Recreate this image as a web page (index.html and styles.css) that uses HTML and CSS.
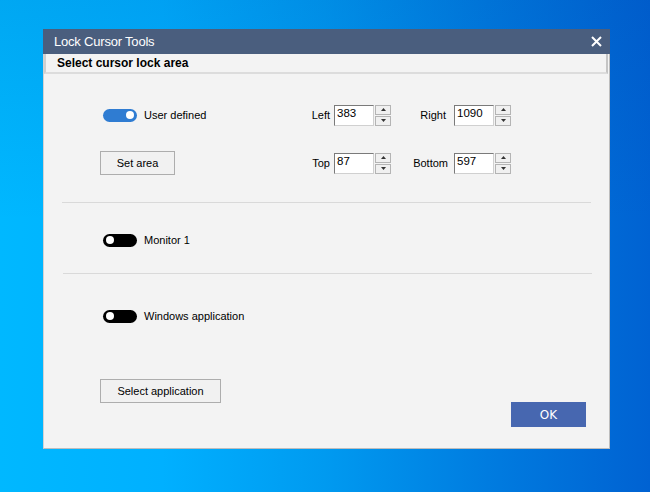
FILE: index.html
```html
<!DOCTYPE html>
<html>
<head>
<meta charset="utf-8">
<link rel="stylesheet" href="styles.css">
</head>
<body>
<div class="desktop">
  <div class="dialog">
    <div class="titlebar">
      <span class="title">Lock Cursor Tools</span>
      <svg class="close" width="11" height="11" viewBox="0 0 11 11"><path d="M1 1L10 10M10 1L1 10" stroke="#fff" stroke-width="2" fill="none"/></svg>
    </div>
    <div class="header">Select cursor lock area</div>

    <div class="section first">
      <div class="cell lead"><span class="toggle on"><i></i></span><span class="lbl">User defined</span></div>
      <div class="cell flabel l1">Left</div>
      <div class="cell"><div class="spin"><div class="box">383</div><div class="arrows"><div class="arrow"><svg width="5" height="3" viewBox="0 0 5 3"><path d="M0 3H5L2.5 0Z" fill="#333"/></svg></div><div class="arrow"><svg width="5" height="3" viewBox="0 0 5 3"><path d="M0 0H5L2.5 3Z" fill="#333"/></svg></div></div></div></div>
      <div class="cell flabel l2">Right</div>
      <div class="cell"><div class="spin"><div class="box">1090</div><div class="arrows"><div class="arrow"><svg width="5" height="3" viewBox="0 0 5 3"><path d="M0 3H5L2.5 0Z" fill="#333"/></svg></div><div class="arrow"><svg width="5" height="3" viewBox="0 0 5 3"><path d="M0 0H5L2.5 3Z" fill="#333"/></svg></div></div></div></div>

      <div class="cell"><button class="btn setarea">Set area</button></div>
      <div class="cell flabel l1">Top</div>
      <div class="cell"><div class="spin"><div class="box">87</div><div class="arrows"><div class="arrow"><svg width="5" height="3" viewBox="0 0 5 3"><path d="M0 3H5L2.5 0Z" fill="#333"/></svg></div><div class="arrow"><svg width="5" height="3" viewBox="0 0 5 3"><path d="M0 0H5L2.5 3Z" fill="#333"/></svg></div></div></div></div>
      <div class="cell flabel l2b">Bottom</div>
      <div class="cell"><div class="spin"><div class="box">597</div><div class="arrows"><div class="arrow"><svg width="5" height="3" viewBox="0 0 5 3"><path d="M0 3H5L2.5 0Z" fill="#333"/></svg></div><div class="arrow"><svg width="5" height="3" viewBox="0 0 5 3"><path d="M0 0H5L2.5 3Z" fill="#333"/></svg></div></div></div></div>
    </div>
    <div class="sep sep1"></div>

    <div class="section second">
      <div class="cell lead"><span class="toggle"><i></i></span><span class="lbl">Monitor 1</span></div>
    </div>
    <div class="sep sep2"></div>

    <div class="section third">
      <div class="cell lead"><span class="toggle"><i></i></span><span class="lbl">Windows application</span></div>
    </div>
    <div class="footer">
      <button class="btn selapp">Select application</button>
      <button class="ok">OK</button>
    </div>
  </div>
</div>
</body>
</html>
```
FILE: styles.css
```css
html, body {
  margin: 0;
  padding: 0;
}
body {
  font-family: "Liberation Sans", Arial, sans-serif;
  font-size: 11px;
  color: #000;
}
.desktop {
  width: 650px;
  height: 492px;
  box-sizing: border-box;
  padding: 29px 0 0 43px;
  background:
    linear-gradient(180deg, rgba(0, 50, 150, 0.12) 0%, rgba(0, 0, 0, 0) 45%),
    linear-gradient(90deg, #00b8ff 0%, #00b0ff 25%, #009af0 50%, #007ce0 75%, #0062d2 100%);
  overflow: hidden;
}
.dialog {
  width: 567px;
  height: 420px;
  box-sizing: border-box;
  background: #f3f3f3;
  border-left: 1px solid #d2d2d2;
  border-right: 1px solid #bdbdbd;
  border-bottom: 1px solid #bdbdbd;
  display: flex;
  flex-direction: column;
}
.titlebar {
  height: 25px;
  flex: none;
  background: #4a5e7e;
  color: #fff;
  display: flex;
  align-items: center;
  justify-content: space-between;
  padding: 0 8px 0 11px;
  margin: 0 -1px 0 -1px;
}
.title {
  font-size: 13px;
  letter-spacing: -0.2px;
}
.close {
  display: block;
}
.header {
  height: 18px;
  flex: none;
  box-sizing: content-box;
  border-left: 2px solid #cfcfcf;
  border-right: 2px solid #c4c4c4;
  border-bottom: 2px solid #dcdcdc;
  margin-right: 1px;
  padding-left: 11px;
  font-size: 12px;
  font-weight: bold;
  line-height: 18px;
}
.section {
  display: grid;
  grid-template-columns: 200px 34px 57px 63px 57px;
  padding-left: 56px;
}
.section.first {
  grid-template-rows: 24px 24px;
  row-gap: 24px;
  padding-top: 29px;
}
.section.second {
  padding-top: 25px;
  grid-template-rows: 24px;
}
.section.third {
  padding-top: 30px;
  grid-template-rows: 24px;
}
.cell {
  display: flex;
  align-items: center;
}
.lead {
  padding-left: 3px;
}
.flabel {
  justify-content: flex-end;
  padding-right: 4px;
}
.l2 {
  padding-right: 8px;
}
.l2b {
  padding-right: 6px;
}
.toggle {
  width: 34px;
  height: 13px;
  border-radius: 7px;
  background: #000;
  display: flex;
  align-items: center;
  padding: 0 3px;
  box-sizing: border-box;
  flex: none;
}
.toggle i {
  width: 8px;
  height: 8px;
  border-radius: 50%;
  background: #fff;
  display: block;
}
.toggle.on {
  background: #2f7cd2;
  justify-content: flex-end;
}
.lbl {
  margin-left: 7px;
}
.btn {
  font-family: "Liberation Sans", Arial, sans-serif;
  font-size: 11px;
  color: #000;
  background: #f1f1f1;
  border: 1px solid #adadad;
  height: 24px;
  padding: 0;
  margin: 0;
}
.setarea {
  width: 75px;
}
.spin {
  display: flex;
  height: 21px;
}
.box {
  width: 40px;
  box-sizing: border-box;
  background: #fff;
  border: 1px solid #7a7a7a;
  border-right-color: #d0d0d0;
  border-bottom-color: #d0d0d0;
  padding: 1px 0 0 2px;
  line-height: 13px;
  font-size: 11.5px;
}
.arrows {
  width: 16px;
  margin-left: 1px;
  display: flex;
  flex-direction: column;
  gap: 1px;
}
.arrow {
  flex: 1;
  box-sizing: border-box;
  background: #f0f0f0;
  border: 1px solid #b4b4b4;
  display: flex;
  align-items: center;
  justify-content: center;
}
.arrow svg {
  display: block;
}
.sep {
  height: 1px;
  background: #d9d9d9;
  flex: none;
}
.sep1 {
  margin: 27px 0 0 18px;
  width: 529px;
}
.sep2 {
  margin: 21px 0 0 19px;
  width: 529px;
}
.footer {
  display: flex;
  justify-content: space-between;
  height: 48px;
  margin-top: 51px;
  padding: 0 23px 0 56px;
}
.selapp {
  width: 121px;
  align-self: flex-start;
}
.ok {
  align-self: flex-end;
  width: 75px;
  height: 25px;
  background: #4767b0;
  color: #fff;
  border: none;
  font-family: "DejaVu Sans", sans-serif;
  font-size: 12px;
  padding: 0;
  margin: 0;
}
```
